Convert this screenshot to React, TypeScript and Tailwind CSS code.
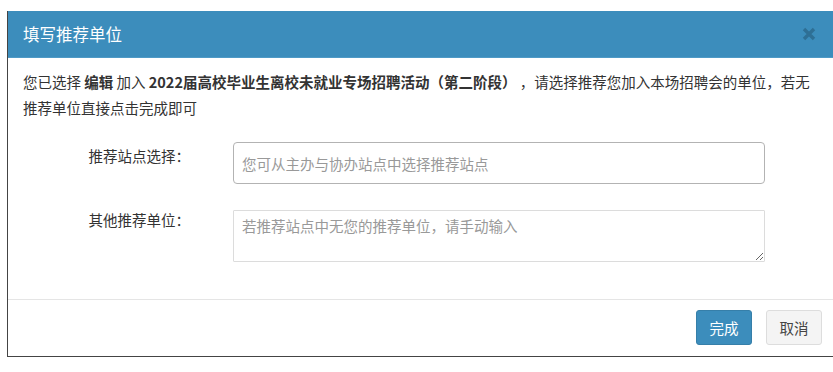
import React from "react";

export default function App() {
  const font = { fontFamily: '"Noto Sans CJK SC", "Noto Sans", sans-serif' };
  return (
    <div className="w-[833px] h-[372px] bg-white overflow-hidden" style={font}>
      <div className="ml-[7px] mt-[11px] w-[830px] border-l border-b border-[#444] bg-white">
        {/* header */}
        <div className="h-[47px] bg-[#3c8dbc] border-b border-[#4f9ac6] flex items-center justify-between pl-[15px] pr-[20px]">
          <span className="text-white text-[16.5px] leading-none">填写推荐单位</span>
          <svg width="14" height="14" viewBox="0 0 14 14" className="mr-[1px]">
            <path d="M2 2 L12 12 M12 2 L2 12" stroke="#2e6f95" strokeWidth="3.4" strokeLinecap="butt" />
          </svg>
        </div>
        {/* body */}
        <div className="pt-[11px] px-[15px] text-[14.5px] leading-[26px] text-[#333] whitespace-nowrap">
          您已选择 <b>编辑</b> 加入 <b>2022届高校毕业生离校未就业专场招聘活动（第二阶段）</b> ，请选择推荐您加入本场招聘会的单位，若无
          <br />
          推荐单位直接点击完成即可
        </div>
        <div className="pt-[21px] pb-[37px] flex flex-col gap-[26px]">
          <div className="flex items-start">
            <label className="w-[182px] text-right text-[14.5px] leading-[20px] text-[#333] pt-[4px]">推荐站点选择：</label>
            <input
              className="ml-[43px] w-[532px] h-[42px] border border-[#b3b3b3] rounded-[4px] px-[8px] text-[14.5px] text-[#333] placeholder:text-[#999] outline-none"
              placeholder="您可从主办与协办站点中选择推荐站点"
            />
          </div>
          <div className="flex items-start">
            <label className="w-[182px] text-right text-[14.5px] leading-[20px] text-[#333] pt-0">其他推荐单位：</label>
            <textarea
              className="ml-[43px] w-[532px] h-[52px] border border-[#dcdcdc] rounded-[1px] px-[8px] py-[5px] text-[14.5px] leading-[20px] text-[#333] placeholder:text-[#999] outline-none block"
              placeholder="若推荐站点中无您的推荐单位，请手动输入"
            />
          </div>
        </div>
        {/* footer */}
        <div className="border-t border-[#e5e5e5] pt-[10px] pb-[11px] flex justify-end gap-[14px] pr-[15px]">
          <button className="w-[56px] h-[35px] bg-[#3c8dbc] border border-[#367fa9] rounded-[3px] text-white text-[14.5px]">完成</button>
          <button className="w-[56px] h-[35px] bg-[#f4f4f4] border border-[#ddd] rounded-[3px] text-[#444] text-[14.5px]">取消</button>
        </div>
      </div>
    </div>
  );
}
